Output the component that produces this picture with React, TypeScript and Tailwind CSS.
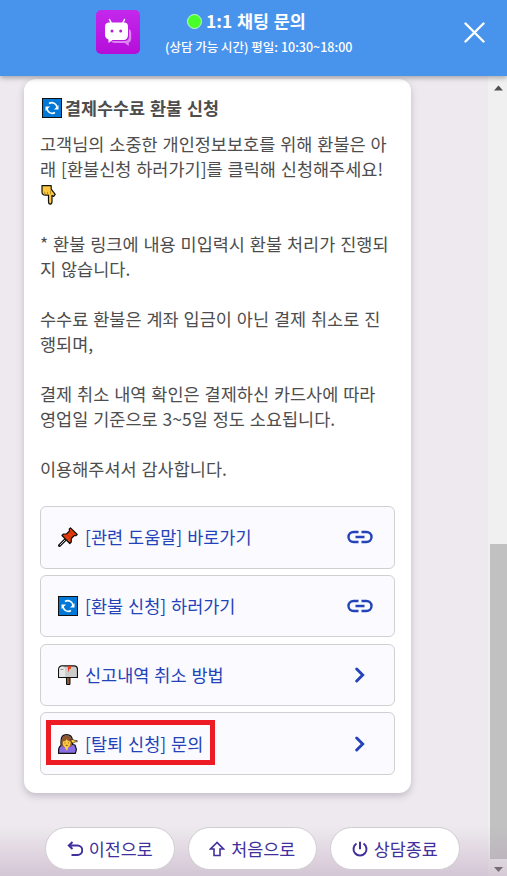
import React from 'react';

type IconProps = { className?: string };

const BotIcon: React.FC<IconProps> = ({ className }) => (
  <svg viewBox="0 0 44 44" className={className}>
    <defs>
      <linearGradient id="bot-bg" x1="0" y1="0" x2="0" y2="1">
        <stop offset="0" stopColor="#c428ec" />
        <stop offset="1" stopColor="#b50dd9" />
      </linearGradient>
    </defs>
    <rect width="44" height="44" rx="5" fill="url(#bot-bg)" />
    <path d="M33 19c1.500.8 2.200 2 2.200 4v5.500c0 2-.8 3.500-2.500 4.200v3.300l-4-3H19c-2 0-3.300-.7-4-2h13.500c3 0 4.500-1.700 4.500-4.500z" fill="#dc86ef" />
    <path d="M13.500 9.500l2 4M28.500 9.500l-2 4" stroke="#fff" strokeWidth="1.500" strokeLinecap="round" />
    <path d="M13.500 12.500h14.500c2.700 0 4 1.500 4 4v8.500c0 3-1.700 5-4.500 5H16.500L12.500 33v-3.500C10 28.500 9 27 9 24.500v-8c0-2.500 1.500-4 4.500-4z" fill="#fff" />
    <circle cx="16" cy="21" r="1.500" fill="#b41bd8" />
    <circle cx="24.700" cy="21" r="1.500" fill="#b41bd8" />
  </svg>
);

const RefreshEmoji: React.FC<IconProps> = ({ className }) => (
  <svg viewBox="0 0 20 20" className={className}>
    <rect x=".5" y=".5" width="19" height="19" fill="#0078d7" stroke="#111" />
    <path d="M7 5.500a5.200 5.200 0 0 1 8 4.500M13 14.500A5.200 5.200 0 0 1 5 10" fill="none" stroke="#fff" strokeWidth="1.500" />
    <path d="M16.500 7v4.500h-4.500zM3.500 13V8.500h4.500z" fill="#fff" />
  </svg>
);

const PointDownEmoji: React.FC<IconProps> = ({ className }) => (
  <svg viewBox="0 0 16 20" className={className}>
    <path d="M1 .7h9.200v3.500l4 5.200-1.500 2-1.700-1v5.800c0 4-3.500 4-3.500 0v-6H4.500C2 10.200 1 9 1 7z" fill="#ffc83d" stroke="#111" strokeWidth="1.200" strokeLinejoin="round" />
    <path d="M3.700 9.500V6.800M6.500 9.500V6.800M9.500 5.500v3.300" stroke="#b98a1f" fill="none" />
  </svg>
);

const PinEmoji: React.FC<IconProps> = ({ className }) => (
  <svg viewBox="0 0 20 20" className={className}>
    <path d="M1.500 18.500L8.500 11.500" stroke="#111" strokeWidth="3" strokeLinecap="round" />
    <path d="M1.800 18.200L8 12" stroke="#ccc" strokeWidth="1" />
    <path d="M12.500.8l6.700 6.700-1.200 1.200-1.700-.2-3 3v3.500l-1.500 1.500L4 8.500 5.500 7h3l3-3-.2-2z" fill="#e43b0b" stroke="#111" strokeWidth="1.200" strokeLinejoin="round" />
    <path d="M12 4.800l3.300 3.300M9 7.500l3.500 3.500" stroke="#b82b06" strokeWidth=".7" />
  </svg>
);

const MailboxEmoji: React.FC<IconProps> = ({ className }) => (
  <svg viewBox="0 0 20 20" className={className}>
    <path d="M8.500 12.500h3.500v7H8.500z" fill="#8e562e" stroke="#111" />
    <path d="M4 .8h12c2 0 3.500 1.500 3.500 3.700v8H.6v-8C.6 2.300 2 .8 4 .8z" fill="#ccc" stroke="#111" strokeWidth="1.200" />
    <path d="M1.200 12V4.500c0-4 6-4 6 0V12z" fill="#e6e6e6" />
    <path d="M2.500 4.500h3" stroke="#999" />
    <path d="M9.500 1.200h3.500v2.500h-1.500L10.500 7.500z" fill="#f03a17" />
  </svg>
);

const WomanEmoji: React.FC<IconProps> = ({ className }) => (
  <svg viewBox="0 0 20 20" className={className}>
    <path d="M8.500.7C4.500.7 3 3.500 3 7.500v4C1.200 12.500.6 14 .6 16.500v2.900h16.800l1-4-1.400-4.400-2.500-.5V7.500C14.500 3 12.500.7 8.500.7z" fill="#886ce4" stroke="#111" strokeWidth="1.200" strokeLinejoin="round" />
    <path d="M3.600 12.500V7c0-7.700 10.300-7.700 10.300 0v5.500z" fill="#8e562e" />
    <path d="M4.700 7.500c2.200 0 3.500-1 4-2.500.7 1.500 2 2.200 4 2.500 0 3.500-.9 5.200-2.700 5.900v1.600l-1.200 1.500L7.300 15v-1.600C5.500 12.700 4.700 11 4.700 7.500z" fill="#ffc83d" />
    <path d="M12.700 5.500h2.600l1.500 1h2.400v1.300h-2.400l-1 1.200h-2z" fill="#ffc83d" stroke="#111" strokeWidth=".6" />
    <path d="M7 8.500v.8M10.400 8.500v.8M7.800 11.400h1.800" stroke="#5b3a12" strokeWidth=".9" />
  </svg>
);

const LinkIcon: React.FC<IconProps> = ({ className }) => (
  <svg viewBox="0 0 26 14" className={className} fill="none" stroke="#2443b8" strokeWidth="2.400">
    <path d="M11.500 2H6.500a5 5 0 0 0 0 10h5M14.500 2h5a5 5 0 0 1 0 10h-5M8.500 7h9" />
  </svg>
);

const ChevronIcon: React.FC<IconProps> = ({ className }) => (
  <svg viewBox="0 0 10 16" className={className} fill="none" stroke="#2443b8" strokeWidth="2.900" strokeLinecap="round">
    <path d="M1.700 2l6 6-6 6" />
  </svg>
);

const links = [
  { label: '[관련 도움말] 바로가기', icon: PinEmoji, external: true },
  { label: '[환불 신청] 하러가기', icon: RefreshEmoji, external: true },
  { label: '신고내역 취소 방법', icon: MailboxEmoji, external: false },
  { label: '[탈퇴 신청] 문의', icon: WomanEmoji, external: false, marked: true },
];

const actions = [
  {
    label: '이전으로',
    icon: <path d="M5.500 1L1.800 4.500 5.500 8M2.500 4.500H10.500a4.700 4.700 0 0 1 0 9.500H4.500" />,
  },
  {
    label: '처음으로',
    icon: <path d="M8 1.500L1.500 8H5v6.500h6V8h3.500z" strokeWidth="1.600" />,
  },
  {
    label: '상담종료',
    icon: <path d="M8 .8v7.500M4.500 2.500a6.500 6.500 0 1 0 7 0" />,
  },
];

const Header: React.FC = () => (
  <header className="relative z-10 flex h-[76px] shrink-0 items-start bg-[#4894ed] pl-24 text-white shadow-[0_2px_5px_rgba(0,0,0,0.3)]">
    <BotIcon className="mt-2.5 size-11" />
    <div className="ml-[25px] mt-[9px] w-[260px] whitespace-nowrap font-bold">
      <div className="flex h-6 items-center pl-[22px]">
        <span className="mr-1 size-[15px] rounded-full border border-[#c7f5d5] bg-[#48ff29]" />
        <h1 className="text-[17.400px] leading-6 [word-spacing:0.800px]">1:1 채팅 문의</h1>
      </div>
      <p className="mt-1 text-[12.500px] font-medium leading-5">(상담 가능 시간) 평일: 10:30~18:00</p>
    </div>
    <button type="button" className="ml-auto mr-[22px] mt-[22px]">
      <svg viewBox="0 0 21 21" className="size-[21px]" stroke="#fff" strokeWidth="2.400" strokeLinecap="round">
        <path d="M1.500 1.500l18 18M19.500 1.500l-18 18" />
      </svg>
    </button>
  </header>
);

const Scrollbar: React.FC = () => (
  <div className="flex w-[19px] flex-col items-end bg-[#f0f0f0]">
    <svg viewBox="0 0 17 17" className="mt-[4px] size-[17px]">
      <path d="M4 10.500L8.500 5.500 13 10.500z" fill="#505050" />
    </svg>
    <div className="mt-[447px] h-[315px] w-[17px] bg-[#c1c1c1]" />
    <svg viewBox="0 0 17 17" className="size-[17px]">
      <path d="M4 8L8.500 13 13 8z" fill="#505050" />
    </svg>
  </div>
);

export default function App() {
  return (
    <div className="relative flex h-[876px] w-[507px] flex-col overflow-hidden bg-[#eee9ef] font-['Noto_Sans_CJK_KR','Noto_Sans',sans-serif]">
      <Header />
      <div className="flex min-h-0 flex-1">
        <main className="flex-1 pl-6 pt-[3px]">
          <section className="h-[714px] w-[387px] rounded-xl bg-white px-4 pt-[17px] text-[#4d4d4d] shadow-[0_3px_7px_rgba(70,50,80,0.25)]">
            <div className="flex h-6 items-center gap-[3px]">
              <RefreshEmoji className="ml-[2px] size-5" />
              <h2 className="whitespace-nowrap text-[17.400px] font-bold leading-6 [word-spacing:1px]">결제수수료 환불 신청</h2>
            </div>
            <div className="mt-[11px] h-[350px] whitespace-nowrap text-[17.500px] leading-[25px] [word-spacing:1px]">
              <p>고객님의 소중한 개인정보보호를 위해 환불은 아</p>
              <p>래 [환불신청 하러가기]를 클릭해 신청해주세요!</p>
              <div className="flex h-[25px] items-end pb-px">
                <PointDownEmoji className="ml-px h-5 w-4" />
              </div>
              <p className="mt-[25px]">* 환불 링크에 내용 미입력시 환불 처리가 진행되</p>
              <p>지 않습니다.</p>
              <p className="mt-[25px]">수수료 환불은 계좌 입금이 아닌 결제 취소로 진</p>
              <p>행되며,</p>
              <p className="mt-[25px]">결제 취소 내역 확인은 결제하신 카드사에 따라</p>
              <p>영업일 기준으로 3~5일 정도 소요됩니다.</p>
              <p className="mt-[25px]">이용해주셔서 감사합니다.</p>
            </div>
            <div className="mt-[25px] flex flex-col gap-[6.300px]">
              {links.map(({ label, icon: Icon, external, marked }) => (
                <button
                  key={label}
                  type="button"
                  className="relative flex h-[62.500px] w-[355px] items-center rounded-md border border-[#d0d0d3] bg-[#fafaff] pl-[17px] text-[#2443b8]"
                >
                  <Icon className="size-5" />
                  <span className="ml-[7px] whitespace-nowrap text-[17.500px] leading-6 [word-spacing:1px]">{label}</span>
                  <span className="ml-auto mr-[21px] flex w-[26px] justify-center">
                    {external ? <LinkIcon className="h-3.5 w-[26px]" /> : <ChevronIcon className="mr-px h-4 w-2.5" />}
                  </span>
                  {marked && <span className="absolute left-[5px] top-[7px] h-[45px] w-[169px] border-[5px] border-[#ed1c24]" />}
                </button>
              ))}
            </div>
          </section>
        </main>
        <Scrollbar />
      </div>
      <footer className="absolute inset-x-0 bottom-0 flex h-[50px] gap-[13px] bg-linear-to-b from-[#b49bb5]/0 to-[#b49bb5]/45 pl-[45px] pt-px">
        {actions.map(({ label, icon }) => (
          <button
            key={label}
            type="button"
            className="flex h-[43px] w-[129.500px] items-center justify-center gap-1.5 rounded-full border border-[#d0cdd2] bg-white text-[#41309c]"
          >
            <svg viewBox="0 0 16 16" className="size-4" fill="none" stroke="currentColor" strokeWidth="2">
              {icon}
            </svg>
            <span className="whitespace-nowrap text-[17.400px] leading-6">{label}</span>
          </button>
        ))}
      </footer>
    </div>
  );
}
